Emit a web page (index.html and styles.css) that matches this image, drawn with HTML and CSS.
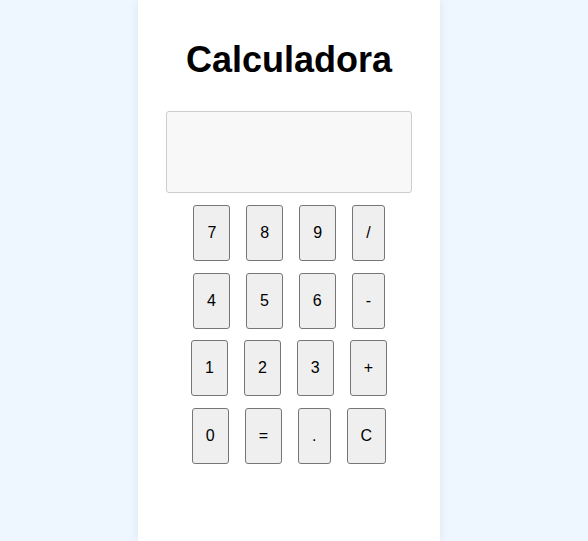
FILE: index.html
```html
<!DOCTYPE html>
<html lang="es">
<head>
<meta charset="utf-8">
<title>Calculadora</title>
<link rel="stylesheet" href="styles.css">
</head>
<body>
<main class="calc">
  <h1 class="title">Calculadora</h1>
  <div class="display"></div>
  <div class="keys">
    <div class="row">
      <button class="key">7</button><button class="key">8</button><button class="key">9</button><button class="key">/</button>
    </div>
    <div class="row">
      <button class="key">4</button><button class="key">5</button><button class="key">6</button><button class="key">-</button>
    </div>
    <div class="row">
      <button class="key">1</button><button class="key">2</button><button class="key">3</button><button class="key">+</button>
    </div>
    <div class="row">
      <button class="key">0</button><button class="key">=</button><button class="key">.</button><button class="key">C</button>
    </div>
  </div>
</main>
</body>
</html>
```

FILE: styles.css
```css
html, body {
  margin: 0;
  padding: 0;
  height: 100%;
}
body {
  background: #eef6ff;
  font-family: "Liberation Sans", Arial, sans-serif;
  display: flex;
  justify-content: center;
  padding-right: 10px;
  box-sizing: border-box;
}
.calc {
  width: 302px;
  box-sizing: border-box;
  min-height: 100%;
  background: #ffffff;
  box-shadow: 0 0 10px rgba(0, 0, 0, 0.08);
  padding: 40px 28px 0;
  display: flex;
  flex-direction: column;
  align-items: center;
}
.title {
  margin: 0;
  font-size: 36px;
  font-weight: bold;
  color: #000;
  line-height: 40px;
}
.display {
  margin-top: 31px;
  width: 100%;
  height: 82px;
  box-sizing: border-box;
  background: #f8f8f8;
  border: 1px solid #cccccc;
  border-radius: 3px;
}
.keys {
  margin-top: 12px;
  display: flex;
  flex-direction: column;
  gap: 11.67px;
  width: 100%;
}
.row {
  display: flex;
  justify-content: center;
  gap: 16px;
}
.key {
  height: 56px;
  padding: 0 13px;
  font-family: "Liberation Sans", Arial, sans-serif;
  font-size: 16px;
  color: #000;
  background: #efefef;
  border: 1px solid #767676;
  border-radius: 3px;
  margin: 0;
}
```
